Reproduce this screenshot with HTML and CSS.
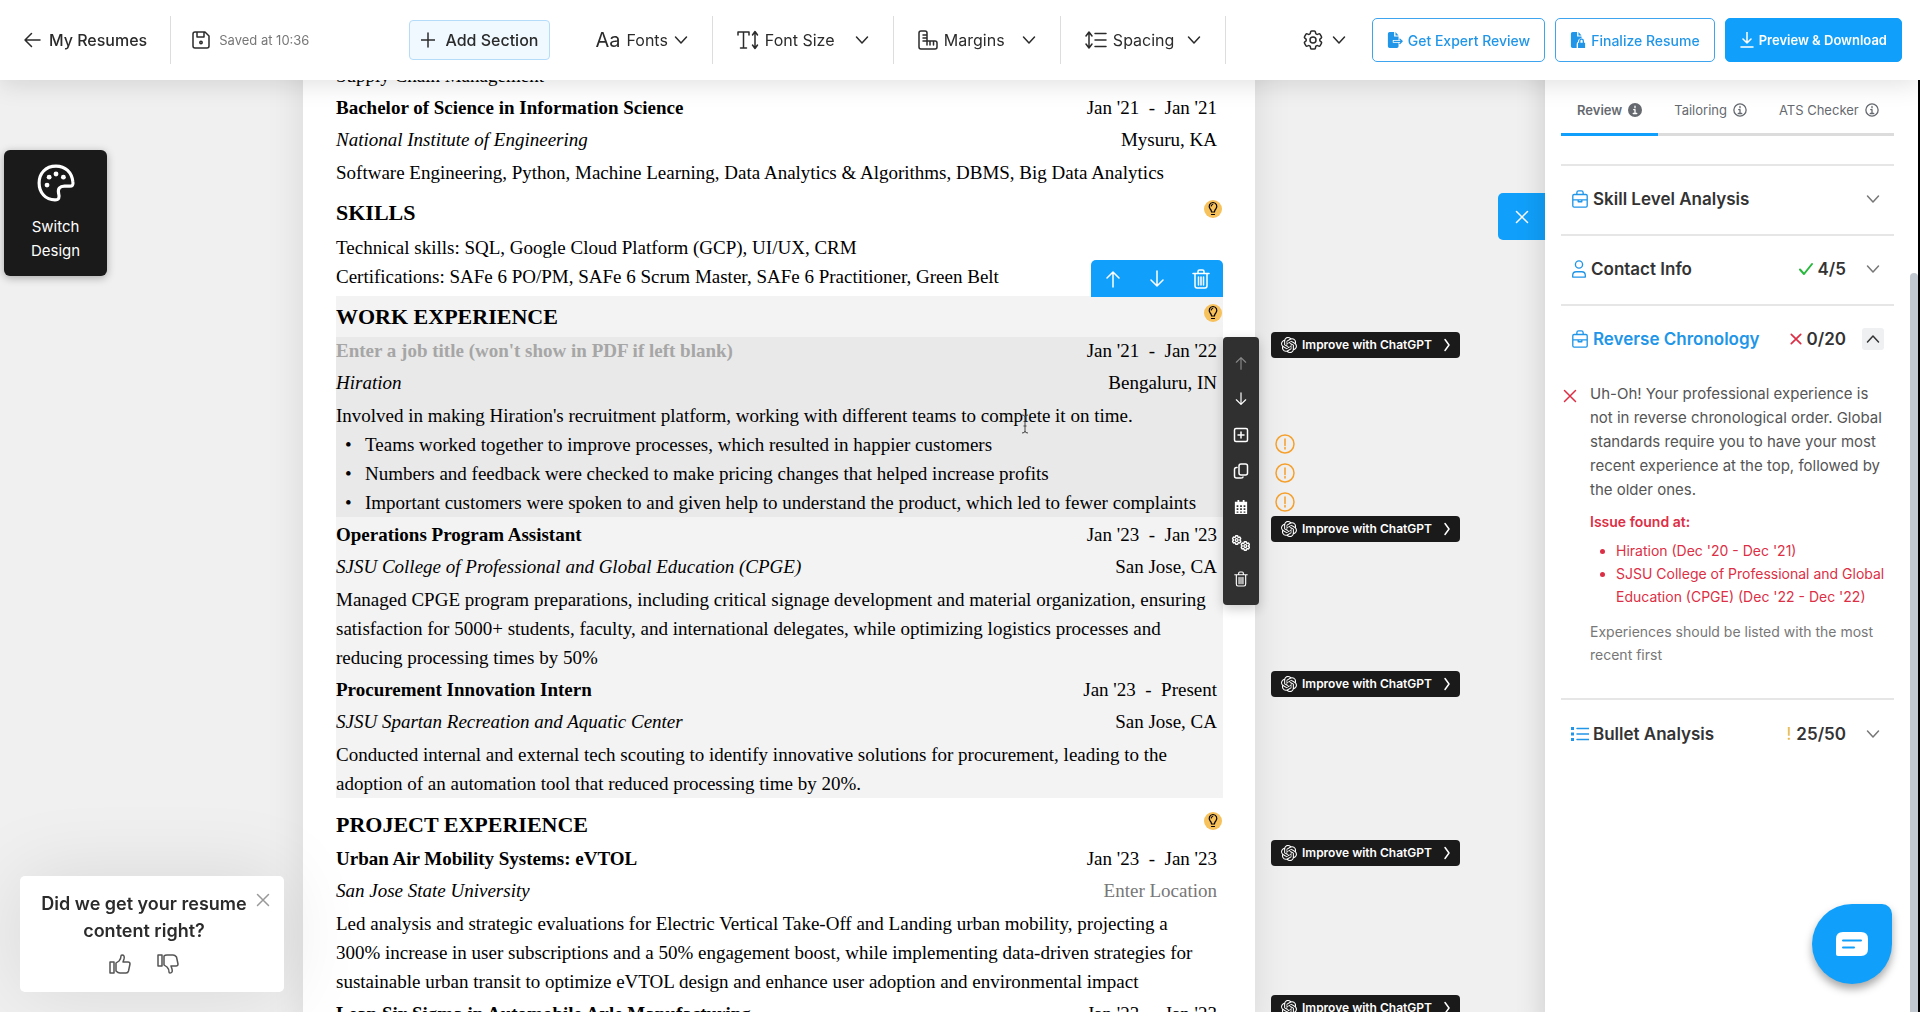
FILE: index.html
```html
<!DOCTYPE html>
<html lang="en">
<head>
    <meta charset="UTF-8">
    <meta name="viewport" content="width=device-width, initial-scale=1.0">
    <title>Resume Editor</title>
    <link rel="stylesheet" href="styles.css">
</head>
<body>
    <!-- Icon sprite -->
    <svg class="sprite" aria-hidden="true">
        <symbol id="arrow-left" viewBox="0 0 18 18"><path d="M17 9H2M8.500 2.500 2 9l6.500 6.500"/></symbol>
        <symbol id="arrow-up" viewBox="0 0 18 18"><path d="M9 17V2M3 8l6-6 6 6"/></symbol>
        <symbol id="arrow-down" viewBox="0 0 18 18"><path d="M9 1v15M3 10l6 6 6-6"/></symbol>
        <symbol id="chevron" viewBox="0 0 14 14"><path d="m1.500 4 5.500 6 5.500-6"/></symbol>
        <symbol id="chevron-up" viewBox="0 0 14 14"><path d="m1.500 10 5.500-6 5.500 6"/></symbol>
        <symbol id="chevron-right" viewBox="0 0 14 14"><path d="m5 1.500 4 5.500-4 5.500"/></symbol>
        <symbol id="cross" viewBox="0 0 14 14"><path d="m1.500 1.500 11 11m0-11-11 11"/></symbol>
        <symbol id="plus" viewBox="0 0 14 14"><path d="M7 0v14M0 7h14"/></symbol>
        <symbol id="check" viewBox="0 0 14 14"><path d="m1 7.500 4 4.500 8-10"/></symbol>
        <symbol id="trash" viewBox="0 0 18 20"><path d="M1 4.500h16M6 4V2.500Q6 1 7.500 1h3Q12 1 12 2.500V4M3 4.500v12Q3 19 5 19h8q2 0 2-2.500v-12M6.500 8v8M9 8v8m2.500-8v8"/></symbol>
        <symbol id="save" viewBox="0 0 18 18"><path d="M3 1h10l4 4v10q0 2-2 2H3q-2 0-2-2V3q0-2 2-2zM5 1v5h7V1"/><circle cx="9" cy="11.500" r="1.200"/></symbol>
        <symbol id="text-size" viewBox="0 0 22 20"><path d="M1 5V2h11v3M6.500 2v16M3.500 18h6M18 2v16M15.500 5 18 1.500 20.500 5M15.500 15l2.500 3.500 2.500-3.500"/></symbol>
        <symbol id="ruler" viewBox="0 0 20 20"><path d="M3 1h4q2 0 2 2v8h8q2 0 2 2v4q0 2-2 2H3q-2 0-2-2V3q0-2 2-2zM5 5h4M5 8h4M9 11v4M12 11v4M15.500 11v4M5 11h4"/></symbol>
        <symbol id="spacing" viewBox="0 0 22 18"><path d="M4 1.500v15M1 5l3-4 3 4M1 13l3 4 3-4M10 2.500h11M10 9h11M10 15.500h11"/></symbol>
        <symbol id="gear" viewBox="0 0 24 24"><path d="M9.594 3.94c.09-.542.56-.94 1.11-.94h2.593c.55 0 1.02.398 1.11.94l.213 1.281c.063.374.313.686.645.87.074.04.147.083.22.127.325.196.72.257 1.075.124l1.217-.456a1.125 1.125 0 0 1 1.37.49l1.296 2.247a1.125 1.125 0 0 1-.26 1.431l-1.003.827c-.293.241-.438.613-.43.992a7.723 7.723 0 0 1 0 .255c-.008.378.137.75.43.991l1.004.827c.424.35.534.955.26 1.43l-1.298 2.247a1.125 1.125 0 0 1-1.369.491l-1.217-.456c-.355-.133-.75-.072-1.076.124a6.47 6.47 0 0 1-.22.128c-.331.183-.581.495-.644.869l-.213 1.281c-.09.543-.56.94-1.11.94h-2.594c-.55 0-1.019-.398-1.11-.94l-.213-1.281c-.062-.374-.312-.686-.644-.87a6.52 6.52 0 0 1-.22-.127c-.325-.196-.72-.257-1.076-.124l-1.217.456a1.125 1.125 0 0 1-1.369-.49l-1.297-2.247a1.125 1.125 0 0 1 .26-1.431l1.004-.827c.292-.24.437-.613.43-.991a6.932 6.932 0 0 1 0-.255c.007-.38-.138-.751-.43-.992l-1.004-.827a1.125 1.125 0 0 1-.26-1.43l1.297-2.247a1.125 1.125 0 0 1 1.37-.491l1.216.456c.356.133.751.072 1.076-.124.072-.044.146-.086.22-.128.332-.183.582-.495.644-.869l.214-1.28Z"/><circle cx="12" cy="12" r="3"/></symbol>
        <symbol id="gears" viewBox="0 0 30 26"><use href="#gear" x="0" y="0" width="17" height="17"/><use href="#gear" x="13" y="9" width="17" height="17"/></symbol>
        <symbol id="file-export" viewBox="0 0 18 18"><path class="solid" d="M1 2q0-2 2-2h5v5h5v4H6.500v3H13v4q0 2-2 2H3q-2 0-2-2zM9.500 0 13 4H9.500z"/><path d="M8 10.500h9M14.500 8l2.500 2.500-2.500 2.500"/></symbol>
        <symbol id="file-lock" viewBox="0 0 18 18"><path class="solid" d="M1 2q0-2 2-2h5v5h5v2q-4 0-4 4-1.500 1-1.500 3v4H3q-2 0-2-2zM9.500 0 13 4H9.500zM9 12h8v6H9z"/><path d="M11 12v-2q0-2 2-2t2 2v2"/></symbol>
        <symbol id="download" viewBox="0 0 14 16"><path d="M7 0v11M3 7l4 4 4-4M1 15h12"/></symbol>
        <symbol id="info" viewBox="0 0 16 16"><circle cx="8" cy="8" r="7"/><path d="M8 4v1.500M6.500 7.500H8V12M6 12h4"/></symbol>
        <symbol id="info-solid" viewBox="0 0 16 16"><circle class="solid" cx="8" cy="8" r="8"/><path class="white" d="M8 3.500v2M6.500 7.500H8V12M6 12h4"/></symbol>
        <symbol id="briefcase" viewBox="0 0 18 20"><path d="M2.500 5h13Q17 5 17 6.500v11q0 1.500-1.500 1.500h-13Q1 19 1 17.500v-11Q1 5 2.500 5zM5.500 5V3q0-2 2-2h3q2 0 2 2v2M1 11h16M7 11v2h4v-2"/></symbol>
        <symbol id="person" viewBox="0 0 16 20"><circle cx="8" cy="5" r="4"/><path d="M1 19v-2q0-4 4-4h6q4 0 4 4v2z"/></symbol>
        <symbol id="list" viewBox="0 0 18 16"><path class="solid" d="M0 1h3v3H0zM0 6.500h3v3H0zM0 12h3v3H0z"/><path d="M6 2.500h12M6 8h12M6 13.500h12"/></symbol>
        <symbol id="palette" viewBox="0 0 36 36"><path d="M18 2C8 2 2 9 2 18s6 16 15 16c4 0 4.500-2.500 3.500-6-1-4.500 1-7 5.500-7h5c2.500 0 3.500-1 3-4C33 8 27 2 18 2z"/><g class="solid"><circle cx="9.500" cy="20" r="2.300"/><circle cx="11.500" cy="12.500" r="2.300"/><circle cx="18" cy="9.500" r="2.300"/><circle cx="25" cy="12.500" r="2.300"/></g></symbol>
        <symbol id="bulb" viewBox="0 0 18 18"><path d="M7.500 12q0-1.800-1.300-3A3.900 3.900 0 0 1 9 2.500 3.900 3.900 0 0 1 11.800 9q-1.300 1.200-1.300 3zM7.500 14.500h3M7.200 6q.3-1.200 1.500-1.500"/></symbol>
        <symbol id="add-box" viewBox="0 0 16 16"><rect x="1.500" y="1.500" width="13" height="13" rx="1.500"/><path d="M8 5v6M5 8h6"/></symbol>
        <symbol id="copy" viewBox="0 0 16 16"><rect x="6" y="1" width="8.500" height="11" rx="2"/><path d="M4 4.500H3.500q-2 0-2 2V13q0 2 2 2H8q2 0 2-1"/></symbol>
        <symbol id="calendar" viewBox="0 0 16 16"><path class="solid" fill-rule="evenodd" d="M1 2h3V0h2v2h4V0h2v2h3v14H1zM3 6v2h2V6zm4 0v2h2V6zm4 0v2h2V6zM3 9.500v2h2v-2zm4 0v2h2v-2zm4 0v2h2v-2zM3 13v1.500h2V13zm4 0v1.500h2V13zm4 0v1.500h2V13z"/></symbol>
        <symbol id="warning" viewBox="0 0 20 20"><circle cx="10" cy="10" r="9"/><path d="M10 5v6.500M10 13.500v1.500"/></symbol>
        <symbol id="thumb-up" viewBox="0 0 22 20"><path d="M1 8h4v11H1zM7 9l3-2q2-2 2-5 0-1 1-1 3 0 2 4l-1 3h5q2 0 2 2l-1.500 7q-.5 2-2.500 2h-6q-2 0-4-2z"/></symbol>
        <symbol id="thumb-down" viewBox="0 0 22 20"><path d="M1 1h4v11H1zM7 11l3 2q2 2 2 5 0 1 1 1 3 0 2-4l-1-3h5q2 0 2-2l-1.500-7Q18 1 16 1h-6Q8 1 7 2z"/></symbol>
        <symbol id="openai" viewBox="0 0 24 24"><path class="solid" d="M22.2819 9.8211a5.9847 5.9847 0 0 0-.5157-4.9108 6.0462 6.0462 0 0 0-6.5098-2.9A6.0651 6.0651 0 0 0 4.9807 4.1818a5.9847 5.9847 0 0 0-3.9977 2.9 6.0462 6.0462 0 0 0 .7427 7.0966 5.98 5.98 0 0 0 .511 4.9107 6.051 6.051 0 0 0 6.5146 2.9001A5.9847 5.9847 0 0 0 13.2599 24a6.0557 6.0557 0 0 0 5.7718-4.2058 5.9894 5.9894 0 0 0 3.9977-2.9001 6.0557 6.0557 0 0 0-.7475-7.0729zm-9.022 12.6081a4.4755 4.4755 0 0 1-2.8764-1.0408l.1419-.0804 4.7783-2.7582a.7948.7948 0 0 0 .3927-.6813v-6.7369l2.02 1.1686a.071.071 0 0 1 .038.052v5.5826a4.504 4.504 0 0 1-4.4945 4.4944zm-9.6607-4.1254a4.4708 4.4708 0 0 1-.5346-3.0137l.142.0852 4.783 2.7582a.7712.7712 0 0 0 .7806 0l5.8428-3.3685v2.3324a.0804.0804 0 0 1-.0332.0615L9.74 19.9502a4.4992 4.4992 0 0 1-6.1408-1.6464zM2.3408 7.8956a4.485 4.485 0 0 1 2.3655-1.9728V11.6a.7664.7664 0 0 0 .3879.6765l5.8144 3.3543-2.0201 1.1685a.0757.0757 0 0 1-.071 0l-4.8303-2.7865A4.504 4.504 0 0 1 2.3408 7.872zm16.5963 3.8558L13.1038 8.364 15.1192 7.2a.0757.0757 0 0 1 .071 0l4.8303 2.7913a4.4944 4.4944 0 0 1-.6765 8.1042v-5.6772a.79.79 0 0 0-.407-.667zm2.0107-3.0231l-.142-.0852-4.7735-2.7818a.7759.7759 0 0 0-.7854 0L9.409 9.2297V6.8974a.0662.0662 0 0 1 .0284-.0615l4.8303-2.7866a4.4992 4.4992 0 0 1 6.6802 4.66zM8.3065 12.863l-2.02-1.1638a.0804.0804 0 0 1-.038-.0567V6.0742a4.4992 4.4992 0 0 1 7.3757-3.4537l-.142.0805L8.704 5.459a.7948.7948 0 0 0-.3927.6813zm1.0976-2.3654l2.602-1.4998 2.6069 1.4998v2.9994l-2.5974 1.4997-2.6067-1.4997Z"/></symbol>
    </svg>

    <header class="topbar">
        <a class="back" href="#"><svg class="icon i18"><use href="#arrow-left"/></svg>My Resumes</a>
        <div class="saved"><svg class="icon i18"><use href="#save"/></svg>Saved at 10:36</div>
        <button class="add-section" type="button"><svg class="icon i14"><use href="#plus"/></svg>Add Section</button>
        <nav class="tools">
            <button class="tool" type="button"><span class="aa">Aa</span>Fonts<svg class="icon i14 caret"><use href="#chevron"/></svg></button>
            <button class="tool size" type="button"><svg class="icon i22"><use href="#text-size"/></svg>Font Size<svg class="icon i14 caret"><use href="#chevron"/></svg></button>
            <button class="tool margins" type="button"><svg class="icon i20"><use href="#ruler"/></svg>Margins<svg class="icon i14 caret"><use href="#chevron"/></svg></button>
            <button class="tool spacing" type="button"><svg class="icon i22"><use href="#spacing"/></svg>Spacing<svg class="icon i14 caret"><use href="#chevron"/></svg></button>
        </nav>
        <div class="actions">
            <button class="settings" type="button" aria-label="Settings"><svg class="icon i24"><use href="#gear"/></svg><svg class="icon i14"><use href="#chevron"/></svg></button>
            <button class="btn" type="button"><svg class="icon i16"><use href="#file-export"/></svg>Get Expert Review</button>
            <button class="btn" type="button"><svg class="icon i16"><use href="#file-lock"/></svg>Finalize Resume</button>
            <button class="btn primary" type="button"><svg class="icon i14"><use href="#download"/></svg>Preview &amp; Download</button>
        </div>
    </header>

    <div class="workspace">
        <aside class="rail">
            <button class="switch-design" type="button"><svg class="icon i36"><use href="#palette"/></svg>Switch<br>Design</button>
            <p class="page-break">Page Break</p>
        </aside>

        <main class="page">
            <section class="section">
                <p class="text">Supply Chain Management</p>
                <article class="entry">
                    <div class="row title"><h3>Bachelor of Science in Information Science</h3><span>Jan '21&nbsp; -&nbsp; Jan '21</span></div>
                    <div class="row sub"><em>National Institute of Engineering</em><span>Mysuru, KA</span></div>
                    <p class="text">Software Engineering, Python, Machine Learning, Data Analytics &amp; Algorithms, DBMS, Big Data Analytics</p>
                </article>
            </section>

            <section class="section">
                <div class="heading"><h2>SKILLS</h2><button class="hint" type="button" aria-label="Hint"><svg class="icon i18"><use href="#bulb"/></svg></button></div>
                <p class="text">Technical skills: SQL, Google Cloud Platform (GCP), UI/UX, CRM</p>
                <p class="text">Certifications: SAFe 6 PO/PM, SAFe 6 Scrum Master, SAFe 6 Practitioner, Green Belt</p>
            </section>

            <section class="section selected">
                <div class="section-tools">
                    <button type="button" aria-label="Move section up"><svg class="icon i18"><use href="#arrow-up"/></svg></button>
                    <button type="button" aria-label="Move section down"><svg class="icon i18"><use href="#arrow-down"/></svg></button>
                    <button type="button" aria-label="Delete section"><svg class="icon i20"><use href="#trash"/></svg></button>
                </div>
                <div class="heading"><h2>WORK EXPERIENCE</h2><button class="hint" type="button" aria-label="Hint"><svg class="icon i18"><use href="#bulb"/></svg></button></div>
                <article class="entry active">
                    <div class="row title"><input type="text" aria-label="Job title" placeholder="Enter a job title (won't show in PDF if left blank)"><span>Jan '21&nbsp; -&nbsp; Jan '22</span></div>
                    <div class="row sub"><em>Hiration</em><span>Bengaluru, IN</span></div>
                    <p class="text">Involved in making Hiration's recruitment platform, working with different teams to complete it on time.</p>
                    <ul class="bullets">
                        <li>Teams worked together to improve processes, which resulted in happier customers<svg class="icon i20 warn"><use href="#warning"/></svg></li>
                        <li>Numbers and feedback were checked to make pricing changes that helped increase profits<svg class="icon i20 warn"><use href="#warning"/></svg></li>
                        <li>Important customers were spoken to and given help to understand the product, which led to fewer complaints<svg class="icon i20 warn"><use href="#warning"/></svg></li>
                    </ul>
                    <svg class="cursor" viewBox="0 0 8 20"><path d="M1 1q3 0 3 2 0-2 3-2M4 3v14M1 19q3 0 3-2 0 2 3 2M2.500 12h3"/></svg>
                    <div class="entry-tools">
                        <button type="button" aria-label="Move up" disabled><svg class="icon i14"><use href="#arrow-up"/></svg></button>
                        <button type="button" aria-label="Move down"><svg class="icon i14"><use href="#arrow-down"/></svg></button>
                        <button type="button" aria-label="Add"><svg class="icon i16"><use href="#add-box"/></svg></button>
                        <button type="button" aria-label="Duplicate"><svg class="icon i16"><use href="#copy"/></svg></button>
                        <button type="button" aria-label="Dates"><svg class="icon i14"><use href="#calendar"/></svg></button>
                        <button type="button" aria-label="Options"><svg class="icon i20 gears"><use href="#gears"/></svg></button>
                        <button type="button" aria-label="Delete"><svg class="icon i14"><use href="#trash"/></svg></button>
                    </div>
                    <button class="improve" type="button"><svg class="icon i16"><use href="#openai"/></svg>Improve with ChatGPT<svg class="icon i14"><use href="#chevron-right"/></svg></button>
                </article>
                <article class="entry">
                    <div class="row title"><h3>Operations Program Assistant</h3><span>Jan '23&nbsp; -&nbsp; Jan '23</span></div>
                    <div class="row sub"><em>SJSU College of Professional and Global Education (CPGE)</em><span>San Jose, CA</span></div>
                    <p class="text">Managed CPGE program preparations, including critical signage development and material organization, ensuring satisfaction for 5000+ students, faculty, and international delegates, while optimizing logistics processes and reducing processing times by 50%</p>
                    <button class="improve" type="button"><svg class="icon i16"><use href="#openai"/></svg>Improve with ChatGPT<svg class="icon i14"><use href="#chevron-right"/></svg></button>
                </article>
                <article class="entry">
                    <div class="row title"><h3>Procurement Innovation Intern</h3><span>Jan '23&nbsp; -&nbsp; Present</span></div>
                    <div class="row sub"><em>SJSU Spartan Recreation and Aquatic Center</em><span>San Jose, CA</span></div>
                    <p class="text">Conducted internal and external tech scouting to identify innovative solutions for procurement, leading to the adoption of an automation tool that reduced processing time by 20%.</p>
                    <button class="improve" type="button"><svg class="icon i16"><use href="#openai"/></svg>Improve with ChatGPT<svg class="icon i14"><use href="#chevron-right"/></svg></button>
                </article>
            </section>

            <section class="section">
                <div class="heading"><h2>PROJECT EXPERIENCE</h2><button class="hint" type="button" aria-label="Hint"><svg class="icon i18"><use href="#bulb"/></svg></button></div>
                <article class="entry">
                    <div class="row title"><h3>Urban Air Mobility Systems: eVTOL</h3><span>Jan '23&nbsp; -&nbsp; Jan '23</span></div>
                    <div class="row sub"><em>San Jose State University</em><input class="location" type="text" aria-label="Location" placeholder="Enter Location"></div>
                    <p class="text">Led analysis and strategic evaluations for Electric Vertical Take-Off and Landing urban mobility, projecting a 300% increase in user subscriptions and a 50% engagement boost, while implementing data-driven strategies for sustainable urban transit to optimize eVTOL design and enhance user adoption and environmental impact</p>
                    <button class="improve" type="button"><svg class="icon i16"><use href="#openai"/></svg>Improve with ChatGPT<svg class="icon i14"><use href="#chevron-right"/></svg></button>
                </article>
                <article class="entry">
                    <div class="row title"><h3>Lean Six Sigma in Automobile Axle Manufacturing</h3><span>Jan '23&nbsp; -&nbsp; Jan '23</span></div>
                    <button class="improve" type="button"><svg class="icon i16"><use href="#openai"/></svg>Improve with ChatGPT<svg class="icon i14"><use href="#chevron-right"/></svg></button>
                </article>
            </section>
        </main>

        <div class="gutter">
            <button class="close-panel" type="button" aria-label="Close panel"><svg class="icon i14"><use href="#cross"/></svg></button>
        </div>

        <aside class="panel">
            <div class="tabs">
                <button class="tab current" type="button">Review<svg class="icon i14"><use href="#info-solid"/></svg></button>
                <button class="tab" type="button">Tailoring<svg class="icon i14"><use href="#info"/></svg></button>
                <button class="tab" type="button">ATS Checker<svg class="icon i14"><use href="#info"/></svg></button>
            </div>
            <div class="checks">
                <div class="check clipped"></div>
                <button class="check" type="button"><svg class="icon i18 blue"><use href="#briefcase"/></svg>Skill Level Analysis<svg class="icon i14 caret"><use href="#chevron"/></svg></button>
                <button class="check" type="button"><svg class="icon i16 blue"><use href="#person"/></svg>Contact Info<span class="score"><svg class="icon i14 green"><use href="#check"/></svg>4/5</span><svg class="icon i14 caret"><use href="#chevron"/></svg></button>
                <div class="check-group">
                    <button class="check open" type="button"><svg class="icon i18 blue"><use href="#briefcase"/></svg>Reverse Chronology<span class="score"><svg class="icon i12 red"><use href="#cross"/></svg>0/20</span><svg class="icon i14 caret"><use href="#chevron-up"/></svg></button>
                    <div class="detail">
                        <svg class="icon i14 red"><use href="#cross"/></svg>
                        <div class="detail-text">
                            <p class="message">Uh-Oh! Your professional experience is not in reverse chronological order. Global standards require you to have your most recent experience at the top, followed by the older ones.</p>
                            <p class="issue">Issue found at:</p>
                            <ul>
                                <li>Hiration (Dec '20 - Dec '21)</li>
                                <li>SJSU College of Professional and Global Education (CPGE) (Dec '22 - Dec '22)</li>
                            </ul>
                            <p class="note">Experiences should be listed with the most recent first</p>
                        </div>
                    </div>
                </div>
                <button class="check last" type="button"><svg class="icon i18 blue"><use href="#list"/></svg>Bullet Analysis<span class="score"><span class="bang">!</span>25/50</span><svg class="icon i14 caret"><use href="#chevron"/></svg></button>
            </div>
            <div class="scrollbar"></div>
        </aside>
    </div>

    <div class="feedback">
        <p>Did we get your resume content right?</p>
        <button class="dismiss" type="button" aria-label="Dismiss"><svg class="icon i14"><use href="#cross"/></svg></button>
        <div class="thumbs">
            <button type="button" aria-label="Yes"><svg class="icon i22"><use href="#thumb-up"/></svg></button>
            <button type="button" aria-label="No"><svg class="icon i22"><use href="#thumb-down"/></svg></button>
        </div>
    </div>

    <button class="chat" type="button" aria-label="Open chat">
        <svg viewBox="0 0 32 24"><path class="bubble" d="M7 0h18q7 0 7 7v10q0 7-7 7H2q-2 0-2-2V7q0-7 7-7z"/><path class="lines" d="M7 8.500h18M7 15.500h11"/></svg>
    </button>
</body>
</html>
```
FILE: styles.css
```css
* {
    box-sizing: border-box;
}

body {
    margin: 0;
    height: 100vh;
    overflow: hidden;
    background: #f0f0f0;
    color: #2b2b2b;
    font-family: Inter, "Liberation Sans", sans-serif;
    font-size: 16px;
}

h2, h3, p, ul {
    margin: 0;
    padding: 0;
}

button, input {
    border: 0;
    padding: 0;
    background: none;
    color: inherit;
    font: inherit;
}

/* Icons */
.sprite {
    position: absolute;
    width: 0;
    height: 0;
}

.icon {
    flex: none;
    fill: none;
    stroke: currentColor;
    stroke-width: 1.5;
    stroke-linecap: round;
    stroke-linejoin: round;
}

.solid {
    fill: currentColor;
    stroke: none;
}

.white {
    stroke: #ffffff;
}

.i12 { width: 12px; height: 12px; }
.i14 { width: 14px; height: 16px; }
.i16 { width: 16px; height: 18px; }
.i18 { width: 18px; height: 18px; }
.i20 { width: 20px; height: 20px; }
.i22 { width: 22px; height: 20px; }
.i24 { width: 24px; height: 24px; }
.i36 { width: 38px; height: 38px; }

.blue { color: #2196e8; }
.green { color: #28b83c; stroke-width: 2; }
.red { color: #dc2f45; stroke-width: 2; }

/* Top bar */
.topbar {
    position: fixed;
    top: 0;
    left: 0;
    right: 0;
    z-index: 10;
    display: flex;
    align-items: center;
    height: 80px;
    padding-right: 18px;
    background: #ffffff;
    box-shadow: 0 4px 24px rgba(0, 0, 0, 0.12);
}

.back {
    display: flex;
    align-items: center;
    gap: 8px;
    height: 48px;
    padding: 0 23px;
    border-right: 1px solid #dddddd;
    color: #2b2b2b;
    font-weight: 500;
    text-decoration: none;
}

.saved {
    display: flex;
    align-items: center;
    gap: 9px;
    padding-left: 21px;
    color: #777777;
    font-size: 13px;
}

.saved .icon {
    color: #2b2b2b;
}

.add-section {
    display: flex;
    align-items: center;
    gap: 10px;
    height: 40px;
    margin-left: 100px;
    padding: 0 11px;
    border: 1px solid #b5dcf9;
    border-radius: 4px;
    background: #f0f9ff;
    font-weight: 500;
}

.tools {
    display: flex;
    margin-left: 21px;
}

.tool {
    display: flex;
    align-items: center;
    gap: 6px;
    height: 48px;
    padding: 0 24px;
    border-right: 1px solid #dddddd;
}

.tool.size { width: 181px; }
.tool.margins { width: 167px; }
.tool.spacing { width: 165px; }

.aa {
    font-size: 20px;
}

.caret {
    margin-left: auto;
}

.actions {
    display: flex;
    align-items: center;
    gap: 10px;
    margin-left: auto;
}

.settings {
    display: flex;
    align-items: center;
    gap: 7px;
    margin-right: 16px;
}

.btn {
    display: flex;
    align-items: center;
    gap: 5px;
    height: 44px;
    padding: 0 14px;
    border: 1px solid #3fa4ef;
    border-radius: 5px;
    color: #2196e8;
    font-size: 14px;
    font-weight: 500;
}

.btn.primary {
    border-color: #10a0fb;
    background: #10a0fb;
    color: #ffffff;
    font-size: 13px;
    font-weight: 600;
}

/* Workspace */
.workspace {
    display: grid;
    grid-template-columns: 303px minmax(0, 1fr) 290px 375px;
    height: 1024px;
}

.rail {
    display: flex;
    flex-direction: column;
    padding: 150px 0 0 4px;
}

.switch-design {
    display: flex;
    flex-direction: column;
    align-items: center;
    width: 103px;
    padding: 14px 0 13px;
    border-radius: 6px;
    background: #1a1a1a;
    box-shadow: 0 2px 8px rgba(0, 0, 0, 0.3);
    color: #ffffff;
    font-size: 15px;
    line-height: 24px;
}

.switch-design .icon {
    margin-bottom: 13px;
    stroke-width: 3;
}

.page-break {
    margin-top: auto;
    padding-left: 85px;
    line-height: 24px;
}

/* Resume page */
.page {
    padding: 61px 32px 0 33px;
    background: #ffffff;
    box-shadow: 0 0 36px rgba(0, 0, 0, 0.1);
    color: #000000;
    font-family: "Liberation Serif", "Times New Roman", serif;
    font-size: 19px;
    line-height: 29px;
}

.section {
    position: relative;
    margin-bottom: 5px;
}

.selected {
    margin-bottom: 6px;
    background: #f3f3f3;
}

.text {
    padding-right: 8px;
}

.heading {
    display: flex;
    justify-content: space-between;
    padding-right: 1px;
}

.heading h2 {
    font-size: 22px;
    line-height: 41px;
}

.hint {
    width: 18px;
    height: 18px;
    margin-top: 8px;
    border-radius: 50%;
    background: #f7c15c;
    line-height: 18px;
}

.hint .icon {
    display: block;
    stroke-width: 1.2;
}

.entry {
    position: relative;
    padding-top: 4px;
}

.heading + .entry {
    padding-top: 0;
}

.entry.active {
    background: #e9e9e9;
}

.row {
    display: flex;
    justify-content: space-between;
    padding-right: 6px;
}

.title {
    line-height: 28px;
}

.sub {
    line-height: 36px;
}

.row h3 {
    font-size: 19px;
}

.row input {
    flex: 1;
    font-weight: bold;
}

.row input::placeholder {
    color: #a6a6a6;
    opacity: 1;
}

.row .location {
    font-weight: normal;
    text-align: right;
}

.row .location::placeholder {
    color: #777777;
}

.bullets {
    padding-left: 29px;
    list-style: none;
}

.bullets li {
    position: relative;
}

.bullets li::before {
    content: "•";
    position: absolute;
    left: -20px;
}

.warn {
    position: absolute;
    left: calc(100% + 52px);
    top: 4px;
    color: #f5a02c;
}

.cursor {
    position: absolute;
    left: 685px;
    top: 77px;
    width: 8px;
    height: 20px;
    fill: none;
    stroke: #444444;
}

.section-tools {
    position: absolute;
    right: 0;
    bottom: 100%;
    display: flex;
    margin-bottom: -1px;
    border-radius: 5px 5px 0 0;
    background: #10a0fb;
    color: #ffffff;
}

.section-tools button {
    display: grid;
    place-items: center;
    width: 44px;
    height: 37px;
}

.entry-tools {
    position: absolute;
    left: 100%;
    top: 0;
    z-index: 2;
    width: 36px;
    padding: 8px 0;
    border-radius: 4px;
    background: #303030;
    box-shadow: 0 4px 12px rgba(0, 0, 0, 0.2);
    color: #ffffff;
}

.entry-tools button {
    display: grid;
    place-items: center;
    width: 36px;
    height: 36px;
}

.entry-tools button:disabled {
    color: #888888;
}

.gears {
    stroke-width: 3;
}

.improve {
    position: absolute;
    left: calc(100% + 48px);
    top: -1px;
    z-index: 1;
    display: flex;
    align-items: center;
    gap: 5px;
    width: 189px;
    height: 26px;
    padding: 0 6px 0 10px;
    border-radius: 4px;
    background: #1a1a1a;
    color: #ffffff;
    font-family: Inter, "Liberation Sans", sans-serif;
    font-size: 12px;
    font-weight: 600;
    line-height: 24px;
    white-space: nowrap;
}

.heading + .entry .improve {
    top: -5px;
}

.improve .icon:last-child {
    margin-left: auto;
}

/* Review panel */
.gutter {
    display: flex;
    justify-content: flex-end;
    align-items: flex-start;
    padding-top: 193px;
}

.close-panel {
    display: grid;
    place-items: center;
    width: 47px;
    height: 47px;
    border-radius: 5px 0 0 5px;
    background: #10a0fb;
    color: #ffffff;
}

.panel {
    position: relative;
    padding: 80px 24px 0 16px;
    border-right: 2px solid #000000;
    background: #ffffff;
    box-shadow: 0 0 28px rgba(0, 0, 0, 0.16);
}

.tabs {
    display: flex;
    border-bottom: 3px solid #dcdcdc;
}

.tab {
    display: flex;
    align-items: center;
    gap: 6px;
    height: 56px;
    margin-bottom: -3px;
    padding: 6px 16px 0;
    border-bottom: 3px solid transparent;
    color: #666a70;
    font-size: 13px;
    white-space: nowrap;
}

.tab.current {
    border-color: #10a0fb;
    font-weight: 600;
}

.check {
    display: flex;
    align-items: center;
    gap: 4px;
    width: 100%;
    height: 70px;
    padding: 0 14px 2px 10px;
    border-bottom: 2px solid #e6e6e6;
    color: #333333;
    font-size: 17px;
    font-weight: 600;
    text-align: left;
}

.check.clipped {
    height: 30px;
}

.check.last {
    border-bottom: 0;
}

.check .caret {
    color: #777777;
}

.score {
    display: flex;
    align-items: center;
    gap: 5px;
    margin-left: auto;
}

.score + .caret {
    margin-left: 16px;
}

.bang {
    color: #e8b93c;
    font-weight: 400;
}

.check-group {
    border-bottom: 2px solid #e6e6e6;
}

.check.open {
    height: 68px;
    border-bottom: 0;
    color: #2196e8;
}

.check.open .score {
    color: #333333;
}

.check.open .caret {
    width: 22px;
    height: 22px;
    margin-left: 12px;
    margin-right: -4px;
    padding: 4px;
    border-radius: 3px;
    background: #eef0f2;
    color: #333333;
}

.detail {
    display: flex;
    gap: 13px;
    padding: 8px 0 32px 2px;
    font-size: 15px;
    line-height: 24px;
}

.detail > .icon {
    margin-top: 6px;
    stroke-width: 1.5;
}

.message {
    color: #555555;
}

.issue {
    margin-top: 8px;
    color: #dc2f45;
    font-size: 14px;
    font-weight: 600;
}

.detail ul {
    margin-top: 5px;
    padding-left: 26px;
    color: #dc2f45;
    font-size: 14px;
    line-height: 23px;
}

.note {
    margin-top: 12px;
    color: #777777;
    font-size: 14px;
    line-height: 23px;
}

.scrollbar {
    position: absolute;
    top: 273px;
    right: 0;
    bottom: 0;
    width: 8px;
    border-radius: 4px;
    background: #c2c8d0;
}

/* Floating widgets */
.feedback {
    position: fixed;
    left: 20px;
    bottom: 20px;
    width: 264px;
    padding: 14px 32px 13px 16px;
    border-radius: 5px;
    background: #ffffff;
    box-shadow: 0 0 80px rgba(0, 0, 0, 0.1);
    font-size: 18px;
    font-weight: 600;
    line-height: 27px;
    text-align: center;
}

.dismiss {
    position: absolute;
    top: 16px;
    right: 14px;
    color: #999999;
    line-height: 14px;
}

.thumbs {
    display: flex;
    justify-content: center;
    gap: 26px;
    padding-top: 10px;
    color: #555555;
    line-height: 22px;
}

.chat {
    position: fixed;
    right: 28px;
    bottom: 28px;
    display: grid;
    place-items: center;
    width: 80px;
    height: 80px;
    border-radius: 50% 10px 50% 50%;
    background: #10a0fb;
    box-shadow: 0 5px 8px rgba(0, 0, 0, 0.35);
}

.chat svg {
    width: 32px;
    height: 24px;
}

.bubble {
    fill: #ffffff;
}

.lines {
    stroke: #10a0fb;
    stroke-width: 2;
    stroke-linecap: round;
}
```
